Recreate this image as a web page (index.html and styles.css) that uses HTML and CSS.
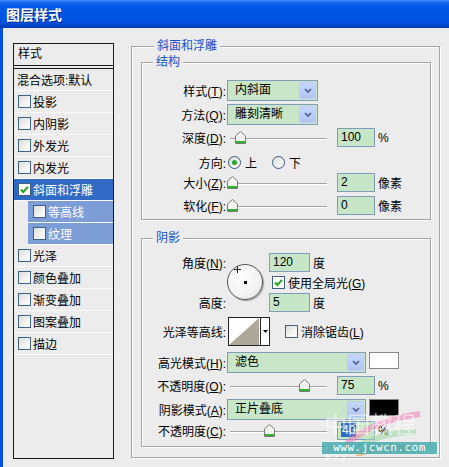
FILE: index.html
```html
<!DOCTYPE html>
<html lang="zh-CN">
<head>
<meta charset="utf-8">
<title>图层样式</title>
<link rel="stylesheet" href="styles.css">
</head>
<body>
<div class="window">
  <div class="titlebar"><span class="title">图层样式</span></div>
  <div class="client">
    <div class="styles-panel">
      <div class="panel-head">样式</div>
      <ul class="style-list">
        <li class="item plain">混合选项:默认</li>
        <li class="item"><span class="cb"></span><span class="item-text">投影</span></li>
        <li class="item"><span class="cb"></span><span class="item-text">内阴影</span></li>
        <li class="item"><span class="cb"></span><span class="item-text">外发光</span></li>
        <li class="item"><span class="cb"></span><span class="item-text">内发光</span></li>
        <li class="item selected"><span class="cb checked"><svg viewBox="0 0 11 11" width="11" height="11"><path d="M2 5.5 L4.3 8 L9 2.8" fill="none" stroke="#21A121" stroke-width="2"/></svg></span><span class="item-text">斜面和浮雕</span></li>
        <li class="item sub"><span class="cb"></span><span class="item-text">等高线</span></li>
        <li class="item sub"><span class="cb"></span><span class="item-text">纹理</span></li>
        <li class="item"><span class="cb"></span><span class="item-text">光泽</span></li>
        <li class="item"><span class="cb"></span><span class="item-text">颜色叠加</span></li>
        <li class="item"><span class="cb"></span><span class="item-text">渐变叠加</span></li>
        <li class="item"><span class="cb"></span><span class="item-text">图案叠加</span></li>
        <li class="item"><span class="cb"></span><span class="item-text">描边</span></li>
      </ul>
    </div>

    <fieldset class="group outer">
      <legend>斜面和浮雕</legend>

      <fieldset class="group inner structure">
        <legend>结构</legend>
        <div class="row r-select">
          <span class="label">样式(<u>T</u>):</span>
          <div class="select narrow"><span class="select-text">内斜面</span><span class="select-btn"><svg viewBox="0 0 8 5" width="8" height="5"><path d="M1 1 L4 4 L7 1" fill="none" stroke="#4A5F8C" stroke-width="1.6"/></svg></span></div>
        </div>
        <div class="row r-select gap3">
          <span class="label">方法(<u>Q</u>):</span>
          <div class="select narrow"><span class="select-text">雕刻清晰</span><span class="select-btn"><svg viewBox="0 0 8 5" width="8" height="5"><path d="M1 1 L4 4 L7 1" fill="none" stroke="#4A5F8C" stroke-width="1.6"/></svg></span></div>
        </div>
        <div class="row r-field gap3">
          <span class="label">深度(<u>D</u>):</span>
          <div class="slider"><span class="thumb" style="left:5px"><svg viewBox="0 0 11 13" width="11" height="13"><path d="M0.5 5 L5.5 0.5 L10.5 5 L10.5 12.5 L0.5 12.5 Z" fill="#F4F4F0" stroke="#7A7A7A"/><rect x="1" y="10" width="9" height="2" fill="#2FB12F"/></svg></span></div>
          <span class="field">100</span><span class="unit">%</span>
        </div>
        <div class="row r-radio gap5">
          <span class="label">方向:</span>
          <span class="radio on"></span><span class="radio-text">上</span>
          <span class="radio second"></span><span class="radio-text">下</span>
        </div>
        <div class="row r-field gap1">
          <span class="label">大小(<u>Z</u>):</span>
          <div class="slider"><span class="thumb" style="left:-3px"><svg viewBox="0 0 11 13" width="11" height="13"><path d="M0.5 5 L5.5 0.5 L10.5 5 L10.5 12.5 L0.5 12.5 Z" fill="#F4F4F0" stroke="#7A7A7A"/><rect x="1" y="10" width="9" height="2" fill="#2FB12F"/></svg></span></div>
          <span class="field">2</span><span class="unit">像素</span>
        </div>
        <div class="row r-field gap4">
          <span class="label">软化(<u>F</u>):</span>
          <div class="slider"><span class="thumb" style="left:-3px"><svg viewBox="0 0 11 13" width="11" height="13"><path d="M0.5 5 L5.5 0.5 L10.5 5 L10.5 12.5 L0.5 12.5 Z" fill="#F4F4F0" stroke="#7A7A7A"/><rect x="1" y="10" width="9" height="2" fill="#2FB12F"/></svg></span></div>
          <span class="field">0</span><span class="unit">像素</span>
        </div>
      </fieldset>

      <fieldset class="group inner shading">
        <legend>阴影</legend>
        <div class="angle-grid">
          <span class="label g-angle">角度(<u>N</u>):</span>
          <div class="dial">
            <span class="dial-dot"></span>
            <svg class="dial-mark" viewBox="0 0 7 7" width="7" height="7"><path d="M3.5 0 V7 M0 3.5 H7" stroke="#222" stroke-width="1"/></svg>
          </div>
          <div class="cell g-angle-val"><span class="field wide">120</span><span class="unit">度</span></div>
          <div class="cell g-global"><span class="cb checked"><svg viewBox="0 0 11 11" width="11" height="11"><path d="M2 5.5 L4.3 8 L9 2.8" fill="none" stroke="#21A121" stroke-width="2"/></svg></span><span class="cb-text">使用全局光(<u>G</u>)</span></div>
          <span class="label g-alt">高度:</span>
          <div class="cell g-alt-val"><span class="field wide">5</span><span class="unit">度</span></div>
        </div>
        <div class="row r-contour">
          <span class="label">光泽等高线:</span>
          <div class="contour">
            <span class="contour-preview"><svg viewBox="0 0 30 27" width="30" height="27" preserveAspectRatio="none"><path d="M0 27 L30 0 L30 27 Z" fill="#ADA899"/></svg></span>
            <span class="contour-btn"><svg viewBox="0 0 5 3" width="5" height="3"><path d="M0 0 H5 L2.5 3 Z" fill="#000"/></svg></span>
          </div>
          <span class="cb aa"></span><span class="cb-text">消除锯齿(<u>L</u>)</span>
        </div>
        <div class="row r-select gap6">
          <span class="label">高光模式(<u>H</u>):</span>
          <div class="select broad"><span class="select-text">滤色</span><span class="select-btn"><svg viewBox="0 0 8 5" width="8" height="5"><path d="M1 1 L4 4 L7 1" fill="none" stroke="#4A5F8C" stroke-width="1.6"/></svg></span></div>
          <span class="swatch white"></span>
        </div>
        <div class="row r-field gap3">
          <span class="label">不透明度(<u>O</u>):</span>
          <div class="slider"><span class="thumb" style="left:69px"><svg viewBox="0 0 11 13" width="11" height="13"><path d="M0.5 5 L5.5 0.5 L10.5 5 L10.5 12.5 L0.5 12.5 Z" fill="#F4F4F0" stroke="#7A7A7A"/><rect x="1" y="10" width="9" height="2" fill="#2FB12F"/></svg></span></div>
          <span class="field">75</span><span class="unit">%</span>
        </div>
        <div class="row r-select gap4">
          <span class="label">阴影模式(<u>A</u>):</span>
          <div class="select broad"><span class="select-text">正片叠底</span><span class="select-btn"><svg viewBox="0 0 8 5" width="8" height="5"><path d="M1 1 L4 4 L7 1" fill="none" stroke="#4A5F8C" stroke-width="1.6"/></svg></span></div>
          <span class="swatch black"></span>
        </div>
        <div class="row r-field gap1">
          <span class="label">不透明度(<u>C</u>):</span>
          <div class="slider"><span class="thumb" style="left:34px"><svg viewBox="0 0 11 13" width="11" height="13"><path d="M0.5 5 L5.5 0.5 L10.5 5 L10.5 12.5 L0.5 12.5 Z" fill="#F4F4F0" stroke="#7A7A7A"/><rect x="1" y="10" width="9" height="2" fill="#2FB12F"/></svg></span></div>
          <span class="field"><span class="sel-text">40</span></span><span class="unit">%</span>
        </div>
      </fieldset>
    </fieldset>
  </div>

  <div class="site-mark">
    <svg class="site-swoosh" viewBox="0 0 90 50" width="90" height="50">
      <path d="M8 40 C30 20 55 12 84 8" fill="none" stroke="#F07CB4" stroke-width="6" opacity="0.55"/>
      <path d="M14 46 C36 30 58 26 80 26" fill="none" stroke="#9ED8A6" stroke-width="6" opacity="0.55"/>
      <path d="M20 49 C40 40 60 40 74 44" fill="none" stroke="#F3A24A" stroke-width="6" opacity="0.6"/>
    </svg>
    <span class="site-name">中国教程网</span>
    <span class="site-url">www.jcwcn.com</span>
  </div>
</div>
</body>
</html>
```

FILE: styles.css
```css
* {
  box-sizing: border-box;
}

html,
body {
  margin: 0;
  padding: 0;
}

body {
  width: 449px;
  height: 467px;
  overflow: hidden;
  background: #ECECEC;
  font-family: "Liberation Sans", "Noto Sans CJK SC", sans-serif;
  font-size: 12px;
  color: #000;
}

u {
  text-decoration: underline;
  text-underline-offset: 1px;
}

/* ---------- window frame ---------- */

.window {
  position: relative;
  width: 449px;
  height: 467px;
  display: flex;
  flex-direction: column;
}

.titlebar {
  height: 28px;
  flex: none;
  display: flex;
  align-items: center;
  padding-left: 6px;
  background: linear-gradient(to bottom,
      #4A96FF 0, #2A7AF5 1px, #1466EE 3px, #0659E8 6px,
      #0055E5 12px, #0053E2 21px, #004CD8 24px, #0040C4 26px, #0036B0 28px);
}

.title {
  color: #fff;
  font-family: "Noto Sans CJK SC", sans-serif;
  font-weight: bold;
  font-size: 14px;
  letter-spacing: 0;
  text-shadow: 1px 1px 0 #0A2A8A;
}

.client {
  flex: 1;
  display: flex;
  align-items: flex-start;
  border-left: 3px solid #0A50DE;
  padding: 11px 0 0 10px;
}

/* ---------- style list on the left ---------- */

.styles-panel {
  width: 101px;
  height: 416px;
  margin-top: 4px;
  flex: none;
  border: 1px solid #1A1A1A;
  display: flex;
  flex-direction: column;
}

.panel-head {
  height: 22px;
  line-height: 21px;
  padding-left: 4px;
  border-bottom: 1px solid #1A1A1A;
}

.style-list {
  list-style: none;
  margin: 2px 0 0;
  padding: 0;
  border-top: 1px solid #1A1A1A;
}

.item {
  height: 22px;
  display: flex;
  align-items: center;
  padding-left: 4px;
  border-bottom: 1px solid #FAFAFA;
  white-space: nowrap;
}

.item.plain {
  padding-left: 3px;
}

.item-text {
  margin-left: 2px;
}

.item.selected {
  background: #316AC5;
  color: #fff;
}

.item.sub {
  margin-left: 14px;
  padding-left: 5px;
  background: #7C9DD6;
  color: #fff;
}

/* ---------- checkboxes and radios ---------- */

.cb {
  width: 13px;
  height: 13px;
  flex: none;
  display: inline-flex;
  align-items: center;
  justify-content: center;
  border: 1px solid #3D6285;
  background: linear-gradient(135deg, #DCDCD7 0%, #F4F4F2 60%, #FFFFFF 100%);
}

.cb.checked {
  background: #fff;
}

.cb-text {
  margin-left: 3px;
  white-space: nowrap;
}

.radio {
  width: 13px;
  height: 13px;
  flex: none;
  margin-left: 2px;
  border-radius: 50%;
  border: 1px solid #2F5A8B;
  background: linear-gradient(135deg, #DCDCD7, #FFFFFF);
  display: inline-flex;
  align-items: center;
  justify-content: center;
}

.radio.on::after {
  content: "";
  width: 5px;
  height: 5px;
  border-radius: 50%;
  background: #2CA82C;
}

.radio.second {
  margin-left: 15px;
}

.radio-text {
  margin-left: 4px;
}

/* ---------- group boxes ---------- */

.group {
  margin: 0;
  min-width: 0;
  border: 1px solid #A4A4A4;
  box-shadow: inset 1px 1px 0 #fff, 1px 1px 0 #fff;
}

.group > legend {
  padding: 0 3px;
  line-height: 14px;
  background: #ECECEC;
  color: #1B4FC4;
}

.outer {
  width: 309px;
  margin-left: 17px;
  padding: 2px 8px 10px 9px;
}

.outer > legend {
  margin-left: 13px;
}

.inner > legend {
  margin-left: 11px;
  color: #1B4FC4;
}

.structure {
  padding: 11px 0 4px 0;
}

.shading {
  margin-top: 11px;
  padding: 7px 0 6px 0;
}

/* ---------- rows ---------- */

.row {
  display: flex;
  align-items: center;
}

.label {
  width: 84px;
  flex: none;
  text-align: right;
  white-space: nowrap;
}

.r-select { height: 21px; }
.r-field { height: 19px; }
.r-radio { height: 20px; }
.r-contour { height: 29px; margin-top: 5px; }

.gap1 { margin-top: 1px; }
.gap3 { margin-top: 3px; }
.gap4 { margin-top: 4px; }
.gap5 { margin-top: 5px; }
.gap6 { margin-top: 6px; }

/* combo box */
.select {
  height: 21px;
  margin-left: 1px;
  display: flex;
  align-items: stretch;
  border: 1px solid #7F9DB9;
  background: #C9E6C9;
}

.select.narrow { width: 91px; }
.select.broad { width: 139px; }

.select-text {
  flex: 1;
  padding-left: 7px;
  line-height: 19px;
}

.select-btn {
  width: 17px;
  margin: 1px;
  border-radius: 2px;
  border: 1px solid #BCCDF4;
  background: linear-gradient(to bottom, #C6D6FC, #B3C6F4);
  display: flex;
  align-items: center;
  justify-content: center;
}

/* text field */
.field {
  width: 38px;
  height: 19px;
  margin-left: 10px;
  flex: none;
  padding-left: 3px;
  line-height: 17px;
  border: 1px solid #7F9DB9;
  background: #C7E5C7;
}

.field.wide {
  width: 41px;
  margin-left: 0;
}

.unit {
  margin-left: 3px;
}

.sel-text {
  background: #316AC5;
  color: #fff;
  padding: 0 1px;
}

/* track bar */
.slider {
  position: relative;
  width: 97px;
  height: 19px;
  margin-left: 4px;
  flex: none;
}

.slider::before {
  content: "";
  position: absolute;
  left: 0;
  right: 0;
  top: 10px;
  height: 1px;
  background: #A3A3A3;
  box-shadow: 0 1px 0 #fff;
}

.thumb {
  position: absolute;
  top: 3px;
  width: 11px;
  height: 13px;
  display: flex;
}

/* swatches */
.swatch {
  width: 30px;
  height: 17px;
  margin-left: 3px;
  align-self: flex-start;
  border: 1px solid #8A8A8A;
}

.swatch.white { background: #fff; }
.swatch.black { background: #000; }

/* ---------- angle / altitude block ---------- */

.angle-grid {
  display: grid;
  grid-template-columns: 84px 43px auto;
  grid-template-rows: 20px 20px 20px;
  align-items: center;
}

.g-angle { grid-row: 1; grid-column: 1; }
.g-alt { grid-row: 3; grid-column: 1; }
.g-angle-val { grid-row: 1; grid-column: 3; }
.g-global { grid-row: 2; grid-column: 3; padding-left: 3px; }
.g-alt-val { grid-row: 3; grid-column: 3; }

.cell {
  display: flex;
  align-items: center;
}

.dial {
  grid-row: 1 / 4;
  grid-column: 2;
  position: relative;
  width: 36px;
  height: 36px;
  margin-left: 1px;
  border-radius: 50%;
  border: 1px solid #555;
  background: radial-gradient(circle at 40% 35%, #FFFFFF 0%, #F2F2F2 60%, #DADADA 100%);
  box-shadow: 1px 1px 1px rgba(0, 0, 0, 0.35);
}

.dial-dot {
  position: absolute;
  left: 16px;
  top: 16px;
  width: 3px;
  height: 3px;
  background: #000;
}

.dial-mark {
  position: absolute;
  left: 6px;
  top: 1px;
}

/* ---------- contour picker ---------- */

.contour {
  margin-left: 2px;
  height: 29px;
  display: flex;
  border: 1px solid #222;
  background: #fff;
}

.contour-preview {
  width: 31px;
  display: flex;
}

.contour-btn {
  width: 9px;
  border-left: 1px solid #222;
  display: flex;
  align-items: center;
  justify-content: center;
}

.cb.aa {
  margin-left: 15px;
}

/* ---------- site mark in the corner ---------- */

.site-mark {
  position: absolute;
  left: 322px;
  top: 404px;
  width: 116px;
  height: 52px;
  pointer-events: none;
}

.site-swoosh {
  position: absolute;
  left: 14px;
  top: 2px;
}

.site-name {
  position: absolute;
  left: 2px;
  top: 6px;
  font-family: "Noto Sans CJK SC", sans-serif;
  font-size: 23px;
  line-height: 26px;
  letter-spacing: 0;
  color: rgba(255, 255, 255, 0.55);
}

.site-url {
  position: absolute;
  left: 0;
  top: 38px;
  width: 115px;
  height: 12px;
  line-height: 12px;
  text-align: center;
  font-family: "DejaVu Sans Mono", monospace;
  font-size: 11px;
  letter-spacing: 0.5px;
  color: #fff;
  background: rgba(70, 170, 175, 0.85);
}
```
